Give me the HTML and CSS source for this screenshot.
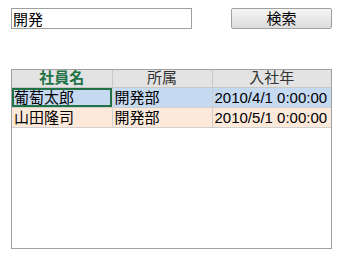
FILE: index.html
```html
<!DOCTYPE html>
<html lang="ja">
<head>
    <meta charset="UTF-8">
    <title>社員検索</title>
    <link rel="stylesheet" href="styles.css">
</head>
<body>
    <div class="search">
        <input type="text" class="search-box" value="開発">
        <button class="btn">検索</button>
    </div>

    <div class="grid">
        <table>
            <colgroup>
                <col class="col-name">
                <col class="col-dept">
                <col>
            </colgroup>
            <thead>
                <tr>
                    <th class="current">社員名</th>
                    <th>所属</th>
                    <th>入社年</th>
                </tr>
            </thead>
            <tbody>
                <tr class="row-blue">
                    <td class="selected">葡萄太郎</td>
                    <td>開発部</td>
                    <td>2010/4/1 0:00:00</td>
                </tr>
                <tr class="row-peach">
                    <td>山田隆司</td>
                    <td>開発部</td>
                    <td>2010/5/1 0:00:00</td>
                </tr>
            </tbody>
        </table>
    </div>
</body>
</html>
```

FILE: styles.css
```css
body {
    margin: 0;
    font-family: "Liberation Sans", "Noto Sans CJK JP", sans-serif;
    font-size: 15px;
    color: #000;
    background: #fff;
}
.search {
    display: flex;
    gap: 39px;
    padding: 8px 0 0 11px;
}
.search-box {
    box-sizing: border-box;
    width: 181px;
    height: 21px;
    margin: 0;
    padding: 0 1px;
    border: 1px solid #a0a0a0;
    font-family: inherit;
    font-size: 15px;
    line-height: 19px;
    color: #000;
    outline: none;
}
.btn {
    box-sizing: border-box;
    width: 101px;
    height: 21px;
    margin: 0;
    padding: 0;
    border: 1px solid #a0a0a0;
    border-radius: 2px;
    background: linear-gradient(#f6f6f6, #dcdcdc);
    font-family: inherit;
    font-size: 15px;
    line-height: 19px;
    color: #000;
}
.grid {
    box-sizing: border-box;
    width: 321px;
    height: 180px;
    margin: 40px 0 0 11px;
    border: 1px solid #a0a0a0;
}
table {
    border-collapse: collapse;
    width: 100%;
    table-layout: fixed;
}
.col-name, .col-dept {
    width: 100px;
}
th, td {
    box-sizing: border-box;
    padding: 0 2px;
    white-space: nowrap;
    overflow: hidden;
}
th {
    height: 17px;
    line-height: 16px;
    background: #e3e3e3;
    border-right: 1px solid #c8c8c8;
    border-bottom: 1px solid #c8c8c8;
    font-weight: normal;
    color: #333;
    text-align: center;
}
th:last-child {
    border-right: none;
}
.current {
    color: #217346;
    font-weight: bold;
}
td {
    height: 20px;
    line-height: 19px;
    border-right: 1px solid #d0d0d0;
    border-bottom: 1px solid #d0d0d0;
}
td:last-child {
    border-right: none;
}
.row-blue td {
    background: #c5d9f1;
}
.row-peach td {
    background: #fde9d9;
}
.selected {
    box-shadow: inset 0 0 0 2px #217346;
}
```
